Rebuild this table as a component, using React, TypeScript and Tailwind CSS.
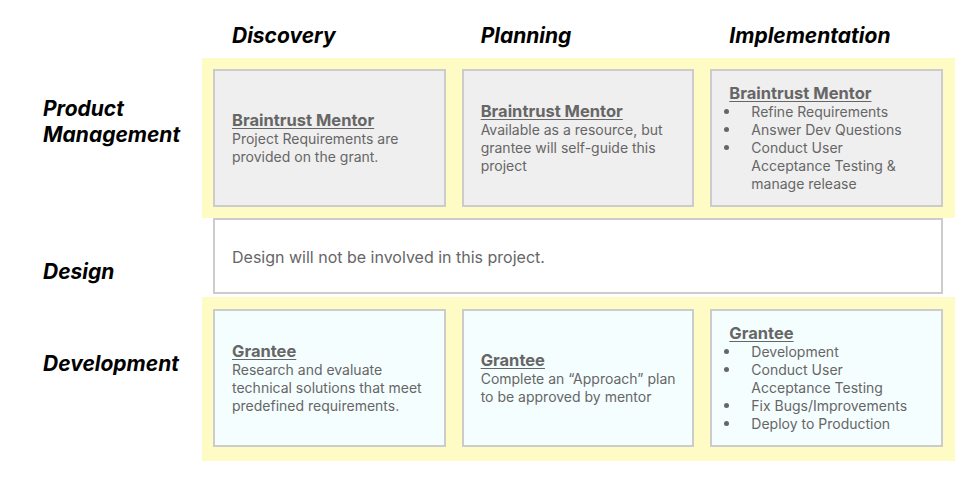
import React from 'react';

type Card = {
  title: string;
  body?: string[];
  bullets?: string[][];
};

const pmCards: Card[] = [
  { title: 'Braintrust Mentor', body: ['Project Requirements are', 'provided on the grant.'] },
  { title: 'Braintrust Mentor', body: ['Available as a resource, but', 'grantee will self-guide this', 'project'] },
  {
    title: 'Braintrust Mentor',
    bullets: [['Refine Requirements'], ['Answer Dev Questions'], ['Conduct User', 'Acceptance Testing &', 'manage release']],
  },
];

const devCards: Card[] = [
  { title: 'Grantee', body: ['Research and evaluate', 'technical solutions that meet', 'predefined requirements.'] },
  { title: 'Grantee', body: ['Complete an \u201CApproach\u201D plan', 'to be approved by mentor'] },
  {
    title: 'Grantee',
    bullets: [['Development'], ['Conduct User', 'Acceptance Testing'], ['Fix Bugs/Improvements'], ['Deploy to Production']],
  },
];

const phases = ['Discovery', 'Planning', 'Implementation'];

const CardBox: React.FC<{ card: Card; bg: string }> = ({ card, bg }) => (
  <div className={`h-[138px] border-2 border-[#cccccc] ${bg} flex flex-col justify-center pl-[17px] pr-2 text-[#666666]`}>
    <div className="text-[16.5px] leading-[19px] font-bold underline underline-offset-2 decoration-1">{card.title}</div>
    {card.body && (
      <div className="text-[14px] leading-[18px]">
        {card.body.map((line, i) => (
          <div key={i}>{line}</div>
        ))}
      </div>
    )}
    {card.bullets && (
      <div className="text-[14px] leading-[18px] -ml-[5px]">
        {card.bullets.map((item, i) => (
          <div key={i} className="flex">
            <span className="w-[27px] shrink-0 h-[18px] flex items-center">
              <span className="w-[5px] h-[5px] rounded-full bg-[#666666]" />
            </span>
            <div>
              {item.map((line, j) => (
                <div key={j}>{line}</div>
              ))}
            </div>
          </div>
        ))}
      </div>
    )}
  </div>
);

const Label: React.FC<{ lines: string[]; pt: string }> = ({ lines, pt }) => (
  <div className={`w-[202px] shrink-0 pl-[43px] ${pt} text-[21px] leading-[26px] font-bold italic text-black`}>
    {lines.map((l, i) => (
      <div key={i}>{l}</div>
    ))}
  </div>
);

export default function App() {
  return (
    <div
      className="w-[979px] h-[485px] bg-white overflow-hidden"
      style={{ fontFamily: 'Inter, "Noto Sans", sans-serif' }}
    >
      {/* column headers */}
      <div className="flex h-[58px]">
        <div className="w-[202px] shrink-0" />
        <div className="w-[753px] pl-[11px] pr-[12px] grid grid-cols-3 gap-4 pt-[23px]">
          {phases.map((p) => (
            <div key={p} className="pl-[19px] text-[21px] leading-[26px] font-bold italic text-black">
              {p}
            </div>
          ))}
        </div>
      </div>

      {/* product management */}
      <div className="flex">
        <Label lines={['Product', 'Management']} pt="pt-[38px]" />
        <div className="w-[753px] bg-[#fffbc4] pl-[11px] pr-[12px] pt-[11px] pb-[11px] grid grid-cols-3 gap-4">
          {pmCards.map((c, i) => (
            <CardBox key={i} card={c} bg="bg-[#efefef]" />
          ))}
        </div>
      </div>

      {/* design */}
      <div className="flex h-[79px]">
        <Label lines={['Design']} pt="pt-[41px]" />
        <div className="pl-[11px]">
          <div className="w-[730px] h-[76px] border-2 border-[#cccccc] bg-white flex items-center pl-[17px] pt-[2px] text-[16px] text-[#666666]">
            Design will not be involved in this project.
          </div>
        </div>
      </div>

      {/* development */}
      <div className="flex">
        <Label lines={['Development']} pt="pt-[54px]" />
        <div className="w-[753px] bg-[#fffbc4] pl-[11px] pr-[12px] pt-[12px] pb-[14px] grid grid-cols-3 gap-4">
          {devCards.map((c, i) => (
            <CardBox key={i} card={c} bg="bg-[#f5feff]" />
          ))}
        </div>
      </div>
    </div>
  );
}
